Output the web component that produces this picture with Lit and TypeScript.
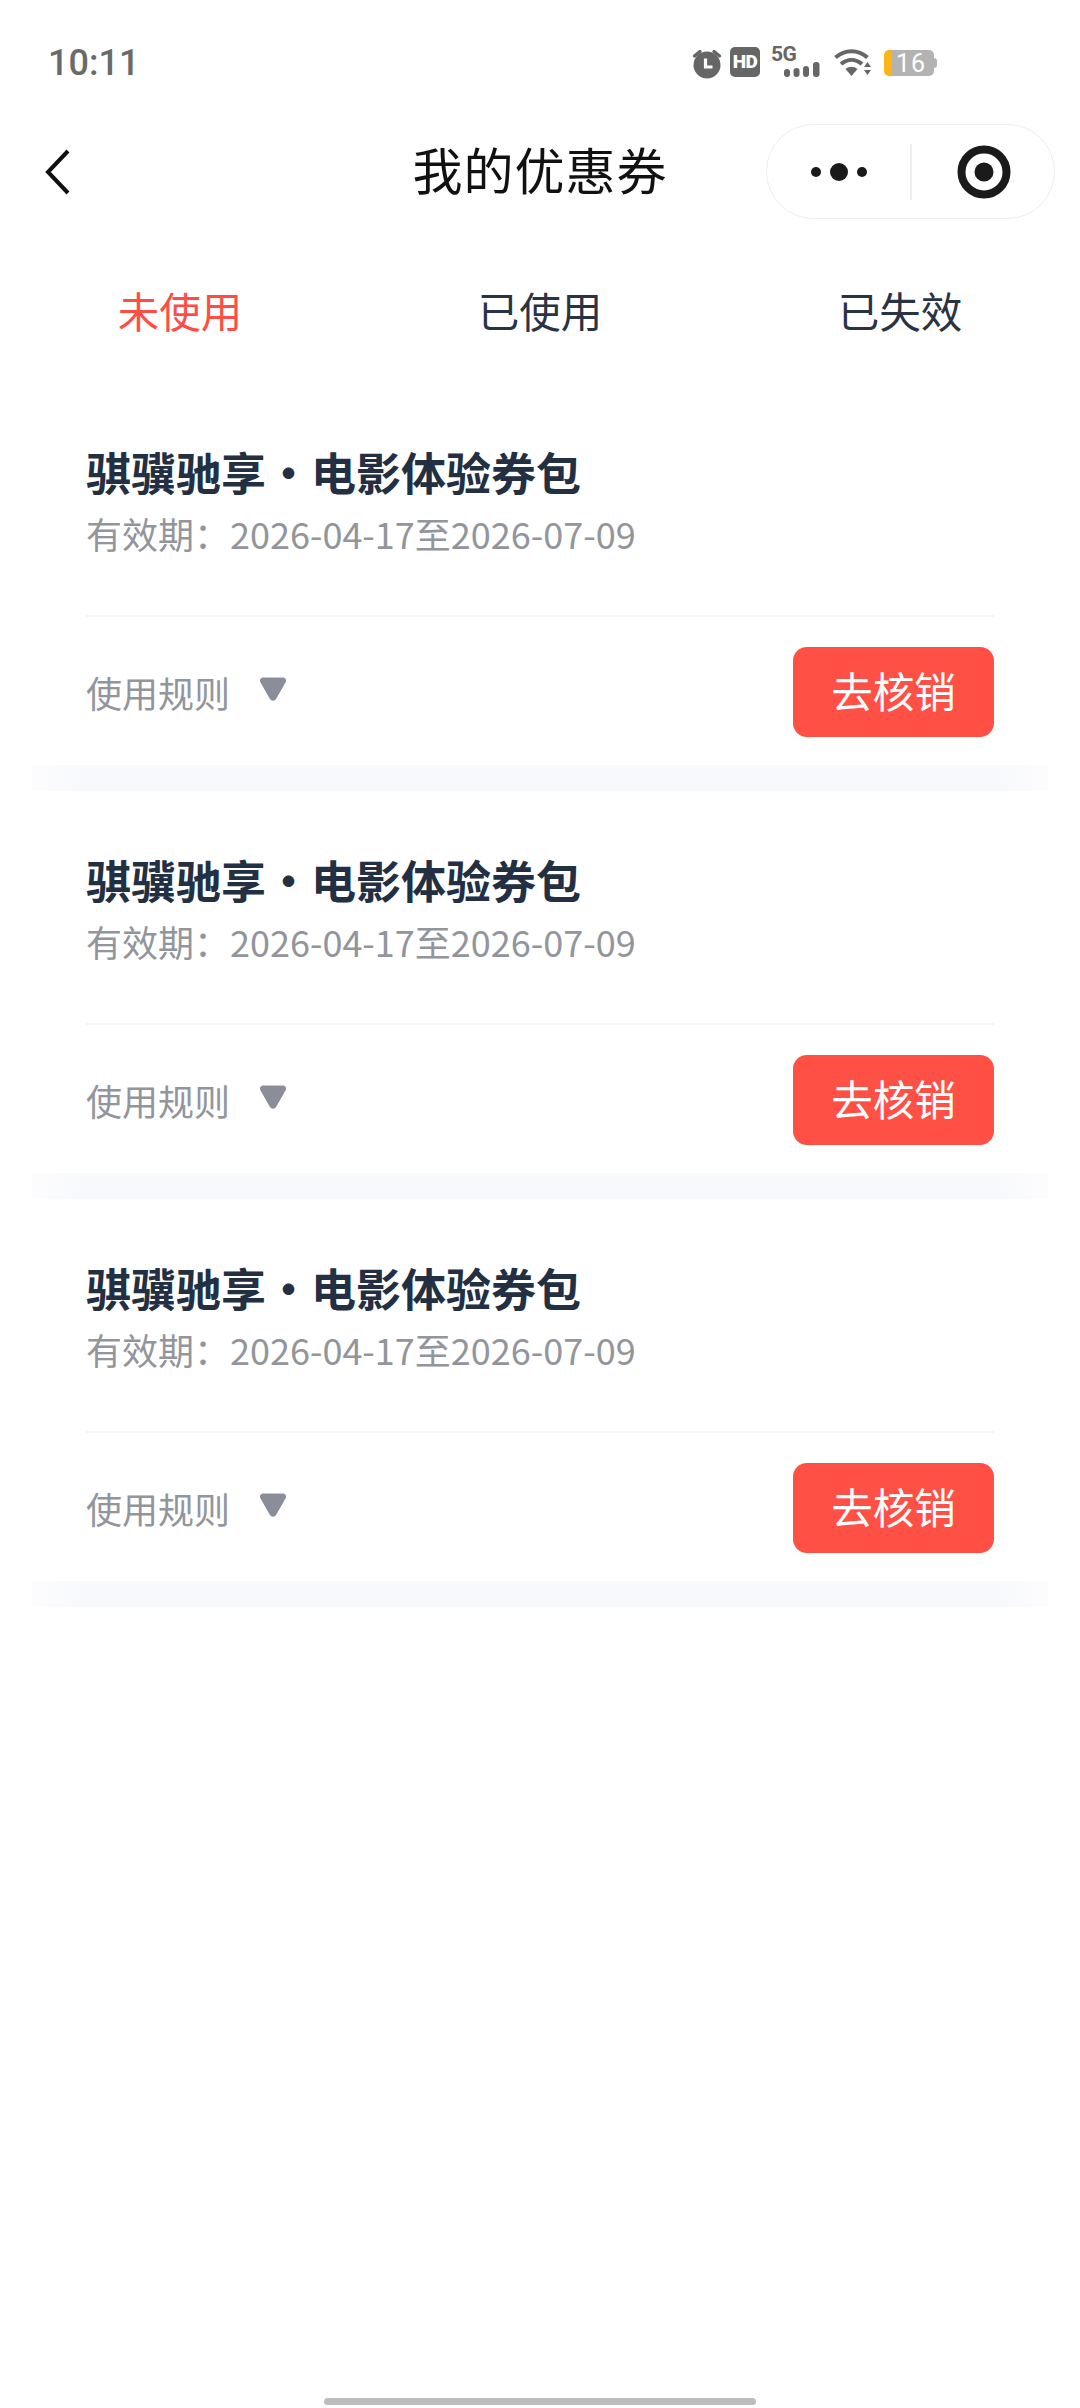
import { LitElement, html, css } from "lit";
import { customElement } from "lit/decorators.js";

@customElement("app-root")
export class AppRoot extends LitElement {
  static styles = css`
    :host { display: block; width: 1080px; height: 2408px; background: #fff; font-family: "Noto Sans CJK SC", "Noto Sans", sans-serif; overflow: hidden; position: relative; }
    .status { height: 124px; box-sizing: border-box; padding: 47px 0 0 48px; display: flex; align-items: flex-start; justify-content: space-between; }
    .time { font: 500 36px/30px Roboto, sans-serif; color: #6a6a6a; margin-top: 1px; }
    .sicons { display: flex; align-items: flex-start; width: 389px; box-sizing: border-box; }
    .alarm { width: 32px; height: 32px; display: block; }
    .hd { margin-left: 7px; width: 30px; height: 30px; border-radius: 5px; background: #666; color: #fff; font: 900 19px/30px Roboto, sans-serif; letter-spacing: -0.5px; text-align: center; }
    .net { margin-left: 11px; width: 50px; display: flex; flex-direction: column; height: 30px; }
    .fg { font: 700 21px/15px Roboto, sans-serif; color: #666; letter-spacing: -0.5px; }
    .bars { display: block; margin-left: 13px; }
    .wifi { display: block; margin-left: 13px; margin-top: 1px; }
    .batt { margin-left: 12px; margin-top: 3px; width: 50px; height: 26px; border-radius: 5px; background: linear-gradient(90deg, #fdb515 0 8px, #b3b3b3 8px); color: #fff; font: 400 25px/27px Roboto, sans-serif; box-sizing: border-box; padding-left: 12px; letter-spacing: 1px; }
    .nub { width: 3px; height: 10px; margin-top: 11px; background: #b3b3b3; border-radius: 0 3px 3px 0; }

    .nav { height: 95px; display: grid; grid-template-columns: 1fr auto 1fr; align-items: center; }
    .back { display: block; margin-left: 44px; }
    .title { font-size: 50px; line-height: 70px; padding-bottom: 8px; color: #111; letter-spacing: 1px; }
    .right { display: flex; justify-content: flex-end; padding-right: 25px; }
    .capsule { width: 289px; height: 95px; box-sizing: border-box; border: 1.5px solid #ededed; border-radius: 48px; display: flex; align-items: center; background: #fff; }
    .more { width: 143px; display: block; }
    .vline { width: 1.5px; height: 56px; background: #eee; }
    .target { display: block; margin-left: 45px; }

    .tabs { display: grid; grid-template-columns: repeat(3, 360px); padding: 61px 0 43px; }
    .tab { text-align: center; font-size: 41.5px; line-height: 60px; color: #2a3344; }
    .tab.on { color: #ff4d45; }

    .card { height: 408px; display: flex; flex-direction: column; box-sizing: border-box; }
    .body { flex: 1; padding: 59px 86px 0 86px; }
    .name { font-size: 45px; font-weight: 700; line-height: 60px; color: #232f42; }
    .date { font-size: 36px; line-height: 50px; margin-top: 6px; color: #92959c; }
    .rule { height: 2px; background: #f3f4f5; margin-top: 57px; }
    .foot { display: flex; align-items: center; justify-content: space-between; padding-top: 30px; }
    .use { display: flex; align-items: center; font-size: 36px; color: #92959c; }
    .tri { display: block; margin-left: 29px; margin-top: -7px; }
    .btn { width: 201px; height: 90px; border-radius: 14px; background: #ff5046; color: #fff; font-size: 41.5px; line-height: 86px; text-align: center; }
    .band { height: 26px; margin: 0 30px; background: linear-gradient(90deg, #fdfdfe, #f8f9fc 50px, #f8f9fc calc(100% - 50px), #fdfdfe); }

    .home { position: absolute; left: 324px; top: 2398px; width: 432px; height: 7px; border-radius: 4px; background: #bdbdbd; }
  `;

  private card() {
    return html`<section class="card">
      <div class="body">
        <div class="name">骐骥驰享·电影体验券包</div>
        <div class="date">有效期：2026-04-17至2026-07-09</div>
        <div class="rule"></div>
        <div class="foot">
          <div class="use">使用规则
            <svg class="tri" width="28" height="26" viewBox="0 0 28 26"><path d="M4.500 1.500h19c3 0 4.300 2.600 3 5L17.200 22.800c-1.500 2.600-4.900 2.600-6.400 0L1.500 6.500c-1.300-2.400 0-5 3-5z" fill="#8a8e99"/></svg>
          </div>
          <div class="btn">去核销</div>
        </div>
      </div>
      <div class="band"></div>
    </section>`;
  }

  render() {
    return html`
      <div class="status">
        <div class="time">10:11</div>
        <div class="sicons">
          <svg class="alarm" viewBox="0 0 32 32">
            <circle cx="16" cy="18" r="13.500" fill="#666"/>
            <path d="M9 4.500 L3.500 9 M23 4.500 L28.500 9" stroke="#666" stroke-width="3.400" stroke-linecap="round" fill="none"/>
            <path d="M14.500 11.500v8.500h7" stroke="#fff" stroke-width="3.200" fill="none"/>
          </svg>
          <div class="hd">HD</div>
          <div class="net">
            <div class="fg">5G</div>
            <svg class="bars" width="37" height="15" viewBox="0 0 37 15" fill="#666">
              <rect x="0" y="7" width="6" height="8" rx="3"/><rect x="9.500" y="6" width="6" height="9" rx="3"/><rect x="19" y="4" width="6" height="11" rx="3"/><rect x="29" y="0" width="6.500" height="15" rx="3"/>
            </svg>
          </div>
          <svg class="wifi" width="38" height="29" viewBox="0 0 38 29">
            <g fill="none" stroke="#666" stroke-width="4">
              <path d="M1.500 9.500C11 1 24 1 33.500 9.500"/>
              <path d="M7 16c6.500-5.500 14.500-5.500 21 0"/>
            </g>
            <path d="M11.500 21c4-3 8-3 12 0l-6 7z" fill="#666"/>
            <path d="M33.500 14l3.500 5h-7zM30 22h7l-3.500 5z" fill="#666"/>
          </svg>
          <div class="batt">16</div>
          <div class="nub"></div>
        </div>
      </div>
      <div class="nav">
        <svg class="back" width="28" height="48" viewBox="0 0 28 48"><path d="M24 3 L4 24 L24 45" fill="none" stroke="#111" stroke-width="4"/></svg>
        <div class="title">我的优惠券</div>
        <div class="right">
          <div class="capsule">
            <svg class="more" width="143" height="24" viewBox="0 0 143 24" fill="#1a1a1a">
              <circle cx="49" cy="12" r="5"/><circle cx="72" cy="12" r="9"/><circle cx="95" cy="12" r="5"/>
            </svg>
            <div class="vline"></div>
            <svg class="target" width="54" height="54" viewBox="0 0 54 54">
              <circle cx="27" cy="27" r="22.500" fill="none" stroke="#1a1a1a" stroke-width="8"/>
              <circle cx="27" cy="27" r="9.500" fill="#1a1a1a"/>
            </svg>
          </div>
        </div>
      </div>
      <div class="tabs">
        <div class="tab on">未使用</div>
        <div class="tab">已使用</div>
        <div class="tab">已失效</div>
      </div>
      ${this.card()}${this.card()}${this.card()}
      <div class="home"></div>
    `;
  }
}
